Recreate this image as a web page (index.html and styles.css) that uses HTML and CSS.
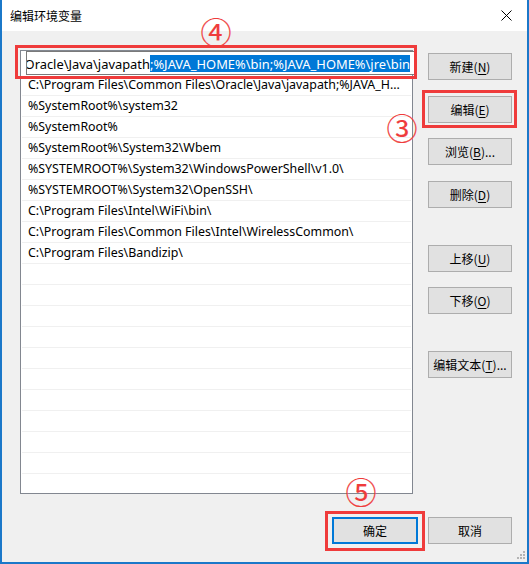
FILE: index.html
```html
<!DOCTYPE html>
<html lang="zh-CN">
<head>
<meta charset="utf-8">
<title>编辑环境变量</title>
<link rel="stylesheet" href="styles.css">
</head>
<body>
<div class="window">
  <div class="titlebar">
    <span class="title">编辑环境变量</span>
    <svg class="close" width="11" height="11" viewBox="0 0 11 11"><path d="M0.5 0.5 L10.5 10.5 M10.5 0.5 L0.5 10.5" stroke="#000" stroke-width="1" fill="none"/></svg>
  </div>
  <div class="content">
    <div class="main">
      <div class="list">
        <div class="edit">
          <span class="edit-text"><span>Oracle\Java\javapath</span><span class="sel">;%JAVA_HOME%\bin;%JAVA_HOME%\jre\bin</span></span>
        </div>
        <div class="rows">
          <div class="row">C:\Program Files\Common Files\Oracle\Java\javapath;%JAVA_H...</div>
          <div class="row">%SystemRoot%\system32</div>
          <div class="row">%SystemRoot%</div>
          <div class="row">%SystemRoot%\System32\Wbem</div>
          <div class="row">%SYSTEMROOT%\System32\WindowsPowerShell\v1.0\</div>
          <div class="row">%SYSTEMROOT%\System32\OpenSSH\</div>
          <div class="row">C:\Program Files\Intel\WiFi\bin\</div>
          <div class="row">C:\Program Files\Common Files\Intel\WirelessCommon\</div>
          <div class="row">C:\Program Files\Bandizip\</div>
          <div class="row"></div>
          <div class="row"></div>
          <div class="row"></div>
          <div class="row"></div>
          <div class="row"></div>
          <div class="row"></div>
          <div class="row"></div>
          <div class="row"></div>
          <div class="row"></div>
          <div class="row"></div>
          <div class="row"></div>
        </div>
      </div>
      <div class="side">
        <div class="btn">新建(<u>N</u>)</div>
        <div class="btn gap-16">编辑(<u>E</u>)</div>
        <div class="btn gap-15">浏览(<u>B</u>)...</div>
        <div class="btn gap-16">删除(<u>D</u>)</div>
        <div class="btn gap-37">上移(<u>U</u>)</div>
        <div class="btn gap-15">下移(<u>O</u>)</div>
        <div class="btn gap-37">编辑文本(<u>T</u>)...</div>
      </div>
    </div>
    <div class="footer">
      <div class="btn default">确定</div>
      <div class="btn">取消</div>
    </div>
  </div>
  <svg class="grip" width="9" height="9" viewBox="0 0 9 9" fill="#b4b4b4">
    <rect x="6" y="0" width="2" height="2"/>
    <rect x="3" y="3" width="2" height="2"/><rect x="6" y="3" width="2" height="2"/>
    <rect x="0" y="6" width="2" height="2"/><rect x="3" y="6" width="2" height="2"/><rect x="6" y="6" width="2" height="2"/>
  </svg>

  <div class="mark mark-edit"></div>
  <div class="num num-4">④</div>
  <div class="mark mark-btn"></div>
  <div class="num num-3">③</div>
  <div class="mark mark-ok"></div>
  <div class="num num-5">⑤</div>
</div>
</body>
</html>
```

FILE: styles.css
```css
* { box-sizing: border-box; }
html, body { margin: 0; padding: 0; background: #ffffff; }
body {
  font-family: "Noto Sans", "Noto Sans CJK SC", sans-serif;
  font-size: 12px;
  color: #000;
}
.window {
  position: relative;
  width: 529px;
  height: 564px;
  border-left: 2px solid #1b78c9;
  border-right: 2px solid #1b78c9;
  border-bottom: 2px solid #1b78c9;
  background: #fff;
  overflow: hidden;
}
.titlebar {
  height: 31px;
  background: #fff;
  display: flex;
  align-items: center;
  padding-left: 8px;
  position: relative;
}
.title {
  font-family: "Noto Sans CJK SC", sans-serif;
  font-size: 12px;
  line-height: 31px;
}
.close {
  position: absolute;
  left: 499px;
  top: 10px;
}
.content {
  background: #f0f0f0;
  height: 531px;
  padding: 19px 15px 0 18px;
}
.main {
  display: flex;
  align-items: flex-start;
}
.list {
  width: 393px;
  height: 444px;
  border: 1px solid #828790;
  background: #fff;
  display: flex;
  flex-direction: column;
}
.edit {
  margin-left: 5px;
  width: 389px;
  height: 24px;
  flex: none;
  border: 1px solid #7a7a7a;
  background: #fff;
  display: flex;
  justify-content: flex-end;
  align-items: stretch;
  overflow: hidden;
  padding: 3px 4px 2px 0;
}
.edit-text {
  white-space: nowrap;
  display: flex;
  line-height: 18px;
  font-size: 12.9px;
}
.sel {
  background: #0078d7;
  color: #fff;
}
.rows {
  flex: 1;
  overflow: hidden;
  margin-left: 1px;
  margin-right: 1px;
}
.row {
  height: 21px;
  line-height: 20px;
  padding-left: 6px;
  border-bottom: 1px solid #f0f0f0;
  white-space: nowrap;
  overflow: hidden;
  font-size: 12.4px;
}
.side {
  margin-left: 15px;
  padding-top: 3px;
  display: flex;
  flex-direction: column;
}
.btn {
  width: 84px;
  height: 27px;
  border: 1px solid #adadad;
  background: #e1e1e1;
  display: flex;
  align-items: center;
  justify-content: center;
  font-family: "Noto Sans CJK SC", sans-serif;
  font-size: 12px;
  line-height: 1;
  white-space: nowrap;
}
.btn u { text-underline-offset: 2px; }
.gap-15 { margin-top: 15px; }
.gap-16 { margin-top: 16px; }
.gap-37 { margin-top: 37px; }
.footer {
  display: flex;
  justify-content: flex-end;
  align-items: center;
  gap: 10px;
  margin-top: 23px;
}
.btn.default {
  width: 86px;
  border: 2px solid #0078d7;
}
.grip {
  position: absolute;
  right: 1px;
  bottom: 2px;
}
.mark {
  position: absolute;
  border: 3px solid #ef3b3b;
}
.mark-edit { left: 13px; top: 45px; width: 402px; height: 34px; }
.mark-btn { left: 420px; top: 90px; width: 95px; height: 38px; }
.mark-ok { left: 323px; top: 511px; width: 100px; height: 40px; }
.num {
  position: absolute;
  color: #ef3b3b;
  font-family: "Noto Sans CJK SC", "DejaVu Sans", sans-serif;
  font-size: 31px;
  line-height: 31px;
  width: 32px;
  text-align: center;
  -webkit-text-stroke: 0.2px #ef3b3b;
}
.num-4 { left: 198px; top: 15px; }
.num-3 { left: 384px; top: 111px; }
.num-5 { left: 343px; top: 475px; }
```
